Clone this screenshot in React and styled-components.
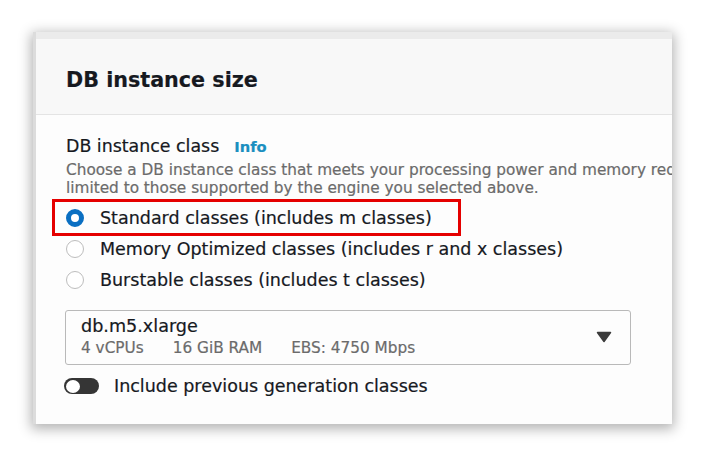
import React from "react";
import styled, { createGlobalStyle } from "styled-components";

const Global = createGlobalStyle`
  html, body { margin: 0; padding: 0; background: #ffffff; }
  body { font-family: "DejaVu Sans", "Open Sans", sans-serif; }
`;

const Page = styled.div`
  width: 704px;
  height: 459px;
  padding: 32px 0 0 33px;
  box-sizing: border-box;
  overflow: hidden;
`;

const Card = styled.div`
  width: 639px;
  height: 392px;
  background: #fdfdfd;
  box-shadow: 0 3px 12px 2px rgba(0, 0, 0, 0.3);
  border-left: 3px solid #dcdcdc;
  box-sizing: border-box;
  overflow: hidden;
  display: flex;
  flex-direction: column;
  -webkit-text-stroke: 0.2px currentColor;
`;

const TopStrip = styled.div`
  height: 7px;
  background: #ebebeb;
  flex: none;
`;

const Header = styled.div`
  height: 76px;
  box-sizing: border-box;
  background: #f8f8f8;
  border-bottom: 1px solid #e4e4e4;
  padding: 29px 0 0 30px;
  flex: none;
`;

const Title = styled.h2`
  margin: 0;
  font-size: 20.7px;
  line-height: 24px;
  font-weight: 700;
  color: #16191f;
`;

const Body = styled.div`
  padding: 20px 0 0 30px;
  display: flex;
  flex-direction: column;
`;

const LabelRow = styled.div`
  display: flex;
  align-items: baseline;
  gap: 15px;
  font-size: 17.4px;
  line-height: 22px;
  color: #16191f;
`;

const InfoLink = styled.span`
  font-size: 14.7px;
  font-weight: 700;
  color: #1a8fc0;
`;

const Desc = styled.div`
  font-size: 15.3px;
  line-height: 18px;
  color: #6b6b6b;
  white-space: nowrap;
  margin-top: ${(p) => p.mt || 0}px;
`;

const RadioList = styled.div`
  display: flex;
  flex-direction: column;
  margin-top: 5px;
`;

const RadioRow = styled.div`
  position: relative;
  display: flex;
  align-items: center;
  height: 31px;
  gap: 16px;
  font-size: 17.5px;
  color: #16191f;
`;

const RadioDot = styled.span`
  width: 18px;
  height: 18px;
  box-sizing: border-box;
  border-radius: 50%;
  flex: none;
  border: ${(p) => (p.checked ? "5.5px solid #0a6fc2" : "1.5px solid #bdbdbd")};
  background: #fff;
`;

const Highlight = styled.span`
  position: absolute;
  left: -14px;
  top: -3px;
  width: 409px;
  height: 37px;
  border: 3px solid #e50000;
  box-sizing: border-box;
  pointer-events: none;
`;

const Select = styled.div`
  margin-top: 15px;
  margin-left: -1px;
  width: 566px;
  height: 55px;
  box-sizing: border-box;
  border: 1px solid #b9b9b9;
  border-radius: 3px;
  padding: 5px 0 0 15px;
  display: flex;
  align-items: flex-start;
  justify-content: space-between;
`;

const SelectText = styled.div`
  display: flex;
  flex-direction: column;
`;

const SelectValue = styled.div`
  font-size: 17.6px;
  line-height: 21px;
  color: #16191f;
`;

const SelectMeta = styled.div`
  display: flex;
  gap: 29px;
  font-size: 15.3px;
  line-height: 22px;
  color: #6b6b6b;
`;

const Caret = styled.svg`
  width: 16px;
  height: 12px;
  margin: 15px 18px 0 0;
`;

const ToggleRow = styled.div`
  display: flex;
  align-items: center;
  gap: 15px;
  margin-top: 11px;
  margin-left: -2px;
  font-size: 17.5px;
  color: #16191f;
`;

const Toggle = styled.span`
  width: 35px;
  height: 16px;
  border-radius: 8px;
  background: #353535;
  position: relative;
  flex: none;
  &::after {
    content: "";
    position: absolute;
    left: 2px;
    top: 1.5px;
    width: 14px;
    height: 13px;
    border-radius: 50%;
    background: #fff;
  }
`;

const options = [
  { label: "Standard classes (includes m classes)", checked: true },
  { label: "Memory Optimized classes (includes r and x classes)", checked: false },
  { label: "Burstable classes (includes t classes)", checked: false },
];

export default function App() {
  return (
    <>
      <Global />
      <Page>
        <Card>
          <TopStrip />
          <Header>
            <Title>DB instance size</Title>
          </Header>
          <Body>
            <LabelRow>
              <span>DB instance class</span>
              <InfoLink>Info</InfoLink>
            </LabelRow>
            <Desc mt={3}>
              Choose a DB instance class that meets your processing power and memory requirements.
            </Desc>
            <Desc>limited to those supported by the engine you selected above.</Desc>
            <RadioList>
              {options.map((o) => (
                <RadioRow key={o.label}>
                  <RadioDot checked={o.checked} />
                  <span>{o.label}</span>
                  {o.checked && <Highlight />}
                </RadioRow>
              ))}
            </RadioList>
            <Select>
              <SelectText>
                <SelectValue>db.m5.xlarge</SelectValue>
                <SelectMeta>
                  <span>4 vCPUs</span>
                  <span>16 GiB RAM</span>
                  <span>EBS: 4750 Mbps</span>
                </SelectMeta>
              </SelectText>
              <Caret viewBox="0 0 16 12">
                <path d="M1.5 1.5 L14.5 1.5 L8 10.5 Z" fill="#3b3b3b" stroke="#3b3b3b" strokeWidth="1.5" strokeLinejoin="round" />
              </Caret>
            </Select>
            <ToggleRow>
              <Toggle />
              <span>Include previous generation classes</span>
            </ToggleRow>
          </Body>
        </Card>
      </Page>
    </>
  );
}
